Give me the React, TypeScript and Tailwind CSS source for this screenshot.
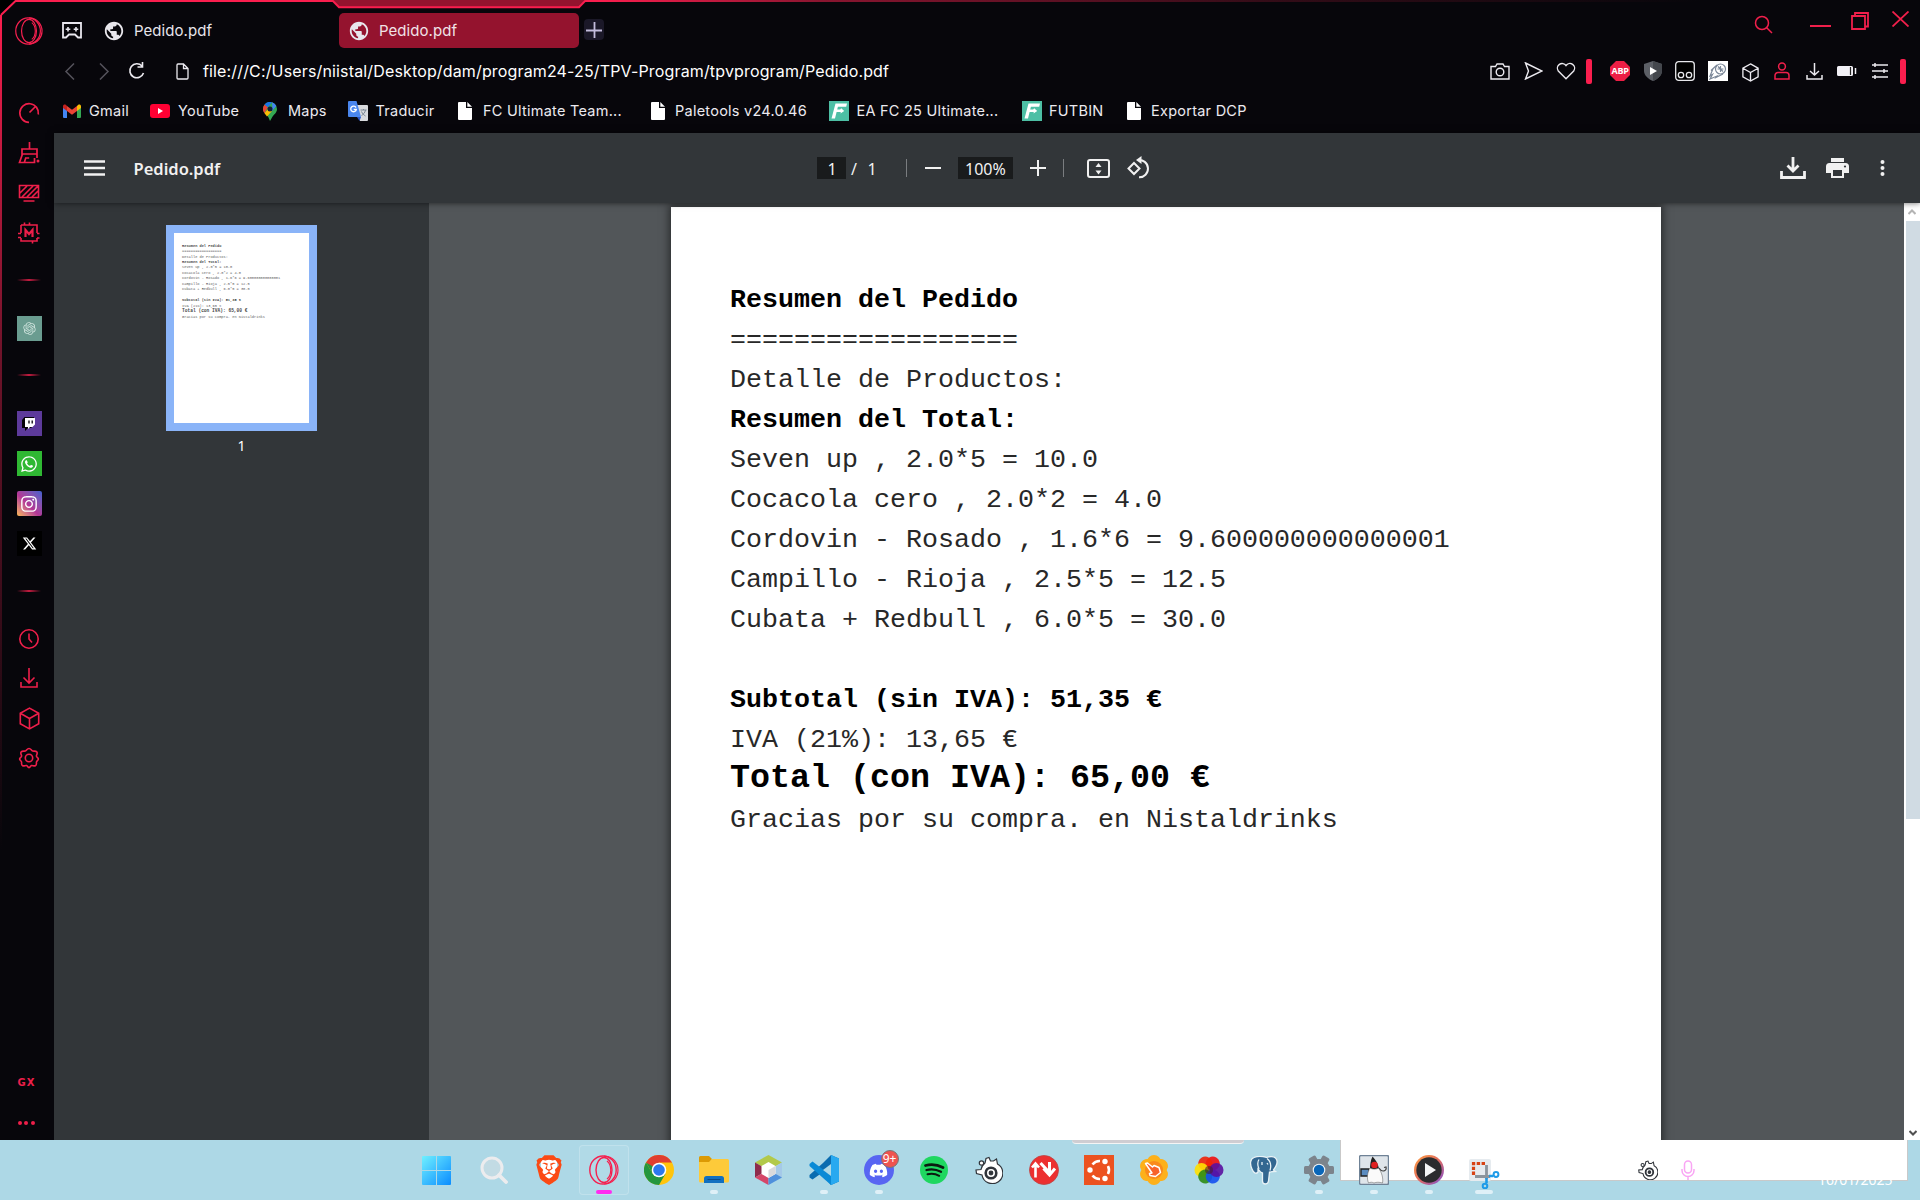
import React from "react";
import type { ReactNode } from "react";
import { FaBrave, FaDiscord, FaWhatsapp, FaInstagram, FaXTwitter } from "react-icons/fa6";
import { MdPublic } from "react-icons/md";
import { RiOpenaiFill } from "react-icons/ri";

const RED = "#fa1e4e";

type P = { children?: ReactNode; w?: number; h?: number; vb?: string; c?: string; sw?: number; f?: string };
function Svg({ children, w = 20, h = 20, vb, c = "currentColor", sw = 1.4, f = "none" }: P) {
  return (
    <svg className="block shrink-0" width={w} height={h} viewBox={vb ?? `0 0 ${w} ${h}`} fill={f} stroke={c} strokeWidth={sw}>
      {children}
    </svg>
  );
}

function Opera({ size, sw = 1.5 }: { size: number; sw?: number }) {
  return (
    <Svg w={size} h={size} vb="0 0 30 30" c="#f5204f" sw={sw}>
      <ellipse cx="14" cy="15" rx="13.200" ry="14" />
      <ellipse cx="15" cy="15" rx="8" ry="12.500" />
      <path d="M18 6c5 4 5 14 0 18" strokeWidth="1.200" />
      <path d="M15 1c9.500.300 14 7.500 14 14s-4.500 13.700-14 14" strokeWidth="1.200" />
    </Svg>
  );
}

function Globe() {
  return (
    <div className="-mx-[2px] flex size-[22px] items-center justify-center text-[#e8e6ec]">
      <MdPublic size={22} />
    </div>
  );
}

function PageFile() {
  return (
    <svg className="block" width="14" height="18" viewBox="0 0 14 18">
      <path d="M1 0h7v6h6v11a1 1 0 0 1-1 1H1a1 1 0 0 1-1-1V1a1 1 0 0 1 1-1z" fill="#fff" />
      <path d="M9.300 0 14 4.700H9.300z" fill="#fff" />
    </svg>
  );
}

function Gmail() {
  return (
    <svg className="block" width="18" height="14" viewBox="0 0 18 14">
      <path d="M0 2v11a1 1 0 0 0 1 1h3V5z" fill="#4285f4" />
      <path d="M18 2v11a1 1 0 0 1-1 1h-3V5z" fill="#34a853" />
      <path d="M4 2v5l5 3.800L14 7V2L9 5.800z" fill="#ea4335" />
      <path d="M0 2.200V4l4 3V2L3 .900C1.800-.100 0 .600 0 2.200z" fill="#c5221f" />
      <path d="M18 2.200V4l-4 3V2l1-1.100c1.200-1 3-.300 3 1.300z" fill="#fbbc04" />
    </svg>
  );
}

function YouTube() {
  return (
    <svg className="block" width="20" height="14" viewBox="0 0 20 14">
      <rect width="20" height="14" rx="3" fill="#ff0033" />
      <path d="M8 4v6l5-3z" fill="#fff" />
    </svg>
  );
}

function Maps() {
  return (
    <svg className="block" width="14" height="19" viewBox="0 0 14 19">
      <path d="M7 0a7 7 0 0 1 7 7c0 4-3.500 5.500-5 8.500L7 19l-1.500-3.500C4.500 12.500 0 11 0 7a7 7 0 0 1 7-7z" fill="#34a853" />
      <path d="M1.700 2.500 5 5l-3.500 6.300C.500 10 0 8.700 0 7c0-1.800.700-3.400 1.700-4.500z" fill="#ea4335" />
      <path d="M1.600 2.500A7 7 0 0 1 9 .300L4.800 5.200z" fill="#1a73e8" />
      <path d="M9 .300a7 7 0 0 1 4.300 3.700L8.800 9.200 9.400 5z" fill="#4285f4" />
      <path d="M1.500 11.300 5 7l4 2-5 5.500z" fill="#fbbc04" />
      <circle cx="7" cy="7" r="2.500" fill="#11203a" />
    </svg>
  );
}

function Translate() {
  return (
    <svg className="block" width="20" height="20" viewBox="0 0 20 20">
      <path d="M8 4h11a1 1 0 0 1 1 1v14a1 1 0 0 1-1 1h-7z" fill="#d8dade" />
      <path d="M1 0h7.500L13 16H1a1 1 0 0 1-1-1V1a1 1 0 0 1 1-1z" fill="#4a86ee" />
      <path d="M9 16h4l-1.500 4z" fill="#2a56c6" />
      <path d="M8 6.600A2.800 2.800 0 1 0 8.300 8.500H5.700" fill="none" stroke="#fff" strokeWidth="1.300" />
      <path d="M12.500 9h6M15.500 8v1M17.500 9c-.500 3-2.500 4.500-4 5.500M13.500 10.500c1 2.500 2.500 3.500 4 4.500" stroke="#7a8794" fill="none" />
    </svg>
  );
}

function Futbin() {
  return (
    <svg className="block" width="20" height="20" viewBox="0 0 20 20">
      <rect width="20" height="20" fill="#4dbfa5" />
      <path d="M6.500 2.500H18l-.800 3.200H8.900L8.200 8.500h3l1-1.300 3 2.700-3.700 2.600.300-1.600H7.600L6 17.500H2.500z" fill="#fff" />
    </svg>
  );
}

const bookmarks: { icon: ReactNode; box: string; cell: string; label: string }[] = [
  { icon: <Gmail />, box: "w-[26px]", cell: "w-[87px]", label: "Gmail" },
  { icon: <YouTube />, box: "w-[28px]", cell: "w-[113px]", label: "YouTube" },
  { icon: <Maps />, box: "w-[25px]", cell: "w-[85px]", label: "Maps" },
  { icon: <Translate />, box: "w-[27.500px]", cell: "w-[110px]", label: "Traducir" },
  { icon: <PageFile />, box: "w-[25px]", cell: "w-[193px]", label: "FC Ultimate Team..." },
  { icon: <PageFile />, box: "w-[24px]", cell: "w-[178px]", label: "Paletools v24.0.46" },
  { icon: <Futbin />, box: "w-[27.500px]", cell: "w-[193px]", label: "EA FC 25 Ultimate..." },
  { icon: <Futbin />, box: "w-[27px]", cell: "w-[105px]", label: "FUTBIN" },
  { icon: <PageFile />, box: "w-[24px]", cell: "w-[130px]", label: "Exportar DCP" },
];

function Cell({ w, children }: { w: string; children?: ReactNode }) {
  return <div className={`${w} flex shrink-0 items-center justify-center`}>{children}</div>;
}

function TabBar() {
  return (
    <div className="flex h-[50px] shrink-0 pt-[13px]">
      <div className="flex h-[35px] w-[58px] items-center pl-[15px]"><Opera size={28} sw={1.3} /></div>
      <div className="flex h-[35px] w-[47px] items-center pl-1">
        <Svg w={20} h={17} c="#e8e6ee" sw={1.8}>
          <path d="M1 1h18v14.500h-3l-3-3H7l-3 3H1z" />
          <path d="M6 5v4.600M3.700 7.300h4.600M14 5v4.600M11.700 7.300h4.600" strokeWidth="1.600" />
        </Svg>
      </div>
      <div className="flex h-[35px] w-[234px] items-center">
        <Globe />
        <span className="mt-[2px] ml-[11px] text-[15px] tracking-[0.060px] text-[#e6e4ea]">Pedido.pdf</span>
      </div>
      <div className="flex h-[35px] w-[240px] items-center rounded-[5px] bg-[#94132e] pl-[11px]">
        <Globe />
        <span className="mt-[2px] ml-[11px] text-[15px] tracking-[0.060px] text-[#f0e2e6]">Pedido.pdf</span>
      </div>
      <div className="mt-[6px] ml-[5px] flex h-[21px] w-5 items-center justify-center rounded bg-[#1b1828]">
        <Svg w={16} h={16} c="#c3bcdc" sw={1.8}><path d="M8.500 0v16M0 8.500h16" /></Svg>
      </div>
      <div className="ml-auto flex h-[35px] pr-[11.500px] text-[#f01f4b]">
        <div className="mt-[2px] mr-[37px]">
          <Svg w={19} h={19} sw={1.5}><circle cx="8" cy="8" r="6.500" /><path d="M12.500 12.500 18 18" /></Svg>
        </div>
        <div className="mr-[20px]"><Svg w={21} h={15} sw={2}><path d="M0 13h21" /></Svg></div>
        <div className="mr-[23px] -mt-px"><Svg w={18} h={18} sw={1.8}><path d="M1 4h13v13H1zM4 3.500V1h13v13.500h-2.500" /></Svg></div>
        <div className="-mt-[2px]"><Svg w={17} h={16} sw={1.8}><path d="M.500.500l16 15M16.500.500l-16 15" /></Svg></div>
      </div>
    </div>
  );
}

function Cube({ size = 20, sw = 1.4 }: { size?: number; sw?: number }) {
  return (
    <Svg w={size} h={size} vb="0 0 20 20" sw={sw}>
      <path d="M10 1l8 4.500v9L10 19l-8-4.500v-9zM2 5.500l8 4.500 8-4.500M10 10v9" />
    </Svg>
  );
}

function AddressBar() {
  return (
    <div className="flex h-[42px] shrink-0 items-center pl-[58px] text-[#eceaf0]">
      <Cell w="w-[24px]"><Svg w={12} h={17} c="#55535c" sw={1.5}><path d="M10 .500 2 8.500l8 8" /></Svg></Cell>
      <div className="w-[10px]" />
      <Cell w="w-[24px]"><Svg w={12} h={17} c="#55535c" sw={1.5}><path d="M2 .500l8 8-8 8" /></Svg></Cell>
      <div className="w-[9px]" />
      <Cell w="w-[24px]">
        <Svg w={18} h={18} sw={1.6}><path d="M14 4A7 7 0 1 0 15.500 11M14.500 0v5h-5" /></Svg>
      </Cell>
      <div className="w-[21px]" />
      <Cell w="w-[24px]">
        <Svg w={13} h={17} sw={1.3}><path d="M1 2a1 1 0 0 1 1-1h5.500L12 5.500V15a1 1 0 0 1-1 1H2a1 1 0 0 1-1-1zM7.500 1v4.500H12" /></Svg>
      </Cell>
      <span className="ml-[9px] text-[16px] tracking-[0.150px] whitespace-nowrap text-white">file:///C:/Users/niistal/Desktop/dam/program24-25/TPV-Program/tpvprogram/Pedido.pdf</span>
      <div className="ml-auto flex items-center pr-[14px]">
        <Cell w="w-[20px]"><Svg w={20} h={17}><path d="M1 3.500h4.500L7 1h6l1.500 2.500H19V16H1z" /><circle cx="10" cy="9" r="3.800" /></Svg></Cell>
        <Cell w="w-[46px]"><Svg w={19} h={18}><path d="M1.500 1 18 9 1.500 17 4.500 9z" /></Svg></Cell>
        <Cell w="w-[20px]"><Svg w={20} h={18}><path d="M10 16.800 2.300 9A4.700 4.700 0 0 1 10 3.500 4.700 4.700 0 0 1 17.700 9z" /></Svg></Cell>
        <div className="ml-[10px] h-[25px] w-[6px] rounded-[2px] bg-[#fa1e4e]" />
        <div className="w-[18px]" />
        <Cell w="w-5">
          <div className="relative flex size-5 items-center justify-center">
            <Svg w={20} h={20} f="#ed1e45" c="none"><path d="M6 0h8l6 6v8l-6 6H6l-6-6V6z" /></Svg>
            <span className="absolute font-['Open_Sans'] text-[9px] font-bold tracking-[-0.300px] text-white">ABP</span>
          </div>
        </Cell>
        <Cell w="w-[45px]">
          <Svg w={18} h={20} c="none"><path d="M9 0l9 3v7c0 4-4 8-9 10-5-2-9-6-9-10V3z" fill="#5c5f66" /><path d="M9 0v20c5-2 9-6 9-10V3z" fill="#44474d" /><path d="M6 6v8l7-4z" fill="#fff" /></Svg>
        </Cell>
        <Cell w="w-5">
          <Svg w={20} h={20} c="#e8e8ec" sw={1.3}><rect x=".700" y=".700" width="18.600" height="18.600" rx="3" fill="#000" /><circle cx="6" cy="14" r="2.700" /><circle cx="14" cy="14" r="2.700" /></Svg>
        </Cell>
        <div className="w-[13px]" />
        <Cell w="w-5">
          <Svg w={20} h={20} c="#7b8798" sw={1.2}><rect width="20" height="20" fill="#fff" stroke="none" /><circle cx="12.500" cy="8" r="5" /><path d="M9 4 3 9.500 4.500 9 2 15l2.500-1.500L2 18l7-3-1 1.500 7-3.500M12.500 5v6M9.500 8h6M10 5.500l5 5" /></Svg>
        </Cell>
        <Cell w="w-[44px]"><div className="mt-[3px]"><Cube size={19} /></div></Cell>
        <Cell w="w-[20px]"><Svg w={16} h={18} c="#f01f4b" sw={1.5}><circle cx="8" cy="4.500" r="3.400" /><path d="M1 17v-3.500a3 3 0 0 1 3-3h8a3 3 0 0 1 3 3V17z" /></Svg></Cell>
        <Cell w="w-[45px]"><Svg w={17} h={18} sw={1.5}><path d="M8.500 1v12M4 9l4.500 4L13 9M1 13v4h15v-4" /></Svg></Cell>
        <Cell w="w-[20px]"><Svg w={20} h={12} c="none"><path d="M1.500 1h13a1.500 1.500 0 0 1 1.500 1.500v7a1.500 1.500 0 0 1-1.500 1.500h-13A1.500 1.500 0 0 1 0 9.500v-7A1.500 1.500 0 0 1 1.500 1z" fill="#f2f0f6" /><path d="M13.500 2v8" stroke="#222" strokeWidth="1.200" /><path d="M18.500 3v6" stroke="#f2f0f6" strokeWidth="1.500" /></Svg></Cell>
        <Cell w="w-[46px]"><Svg w={16} h={18} sw={1.5}><path d="M0 3h16M0 9h16M0 15h16M3 1v4M12 7v4M3 13v4" /></Svg></Cell>
        <div className="-ml-[3px] h-[25px] w-[6px] rounded-[2px] bg-[#fa1e4e]" />
      </div>
    </div>
  );
}

function Bookmarks() {
  return (
    <div className="flex h-[41px] shrink-0 items-center pb-[3px] pl-[63px] text-[14.500px] tracking-[0.250px] text-[#eceaf0]">
      {bookmarks.map((b, i) => (
        <div key={i} className={`${b.cell} flex shrink-0 items-center whitespace-nowrap`}>
          <div className={`${b.box} shrink-0`}>{b.icon}</div>
          <span>{b.label}</span>
        </div>
      ))}
    </div>
  );
}

function Divider() {
  return <div className="h-[2px] w-6 bg-linear-to-r from-transparent via-[#c51c40] to-transparent" />;
}

const side: { h: string; el: ReactNode }[] = [
  { h: "h-[40px]", el: <Svg w={22} h={22} sw={1.7}><path d="M20.300 12.500A9.300 9.300 0 1 0 11 20.300M11.500 10.500l6-6" /></Svg> },
  { h: "h-[40px]", el: <Svg w={22} h={22} sw={1.7}><path d="M11.500 0v6.500M4 7h15v5H4zM4.500 12 1.500 20.500h15V16M19 12v4M6.500 20l1.200-4h3.500" /><circle cx="20" cy="19" r="1.500" fill="currentColor" stroke="none" /></Svg> },
  { h: "h-[40px]", el: <Svg w={22} h={18} sw={1.6}><path d="M1.500 1.500h19v12h-19zM5.500 17h11M2 9l7-7M4 13l11-11M9 13 20 2M14 13l6-6" /></Svg> },
  { h: "h-[40px]", el: <Svg w={24} h={24} sw={1.6}><path d="M4 4h16v8M20 17v3H4v-3M4 4v8M7.500 4V1.500M12.500 4V1.500M4 12.500H1M4 16.500H1M20 12.500h2.500M20 17h2.500M15.500 20v2.500" /><path d="M8.500 16V9l3.500 4 3.500-4v7" strokeWidth="2.200" /></Svg> },
  { h: "h-[54px]", el: <Divider /> },
  { h: "h-[43px]", el: <Cell w="size-[25px] bg-[#6a9c90] text-[#cfe3dd]"><RiOpenaiFill size={15} /></Cell> },
  { h: "h-[50px]", el: <Divider /> },
  { h: "h-[47px]", el: <Cell w="size-[25px] bg-[#5d3a9b] text-white"><TwitchBubble /></Cell> },
  { h: "h-[33px]", el: <Cell w="size-[25px] bg-[#2fb833] text-white"><FaWhatsapp size={18} /></Cell> },
  { h: "h-[47px]", el: <Cell w="size-[25px] rounded-[2px] bg-linear-to-bl from-[#3b5fd0] via-[#b33596] via-55% to-[#fbb64c] text-white"><Instagram /></Cell> },
  { h: "h-[33px]", el: <Cell w="size-[25px] bg-black text-white"><FaXTwitter size={15} /></Cell> },
  { h: "h-[61px]", el: <Divider /> },
  { h: "h-[35px]", el: <Svg w={22} h={22} sw={1.6}><circle cx="11" cy="11" r="9.200" /><path d="M11 5.500V11l3 3.500" /></Svg> },
  { h: "h-[43px]", el: <Svg w={20} h={22} sw={1.6}><path d="M10 1v14.500M4.500 10.500 10 16l5.500-5.500M2 15v5h16v-5" /></Svg> },
  { h: "h-[38px]", el: <Cube size={23} /> },
  { h: "h-[42px]", el: <Svg w={22} h={22} sw={1.6}><path d="M11 1.500c2 0 2.200 2 3.700 2.500 1.300.400 3-.500 4.200 1 1 1.700-.500 2.700-.500 4s2 2 2 3c0 1.300-2 2-2 3.300s.500 2.700-1 3.400c-1.500.600-2.800-.500-4-.100-1 .400-1.200 2-2.400 2s-1.400-1.600-2.400-2c-1.200-.400-2.500.700-4 .100-1.500-.700-1-2.100-1-3.400S1.600 13 1.600 12s2-1.700 2-3-1.500-2.300-.500-4c1.200-1.500 2.900-.600 4.200-1C8.800 3.500 9 1.500 11 1.500z" /><circle cx="11" cy="11" r="3.700" /></Svg> },
];

function Instagram() {
  return <FaInstagram size={18} />;
}

function TwitchBubble() {
  return (
    <Svg w={14} h={14} c="none">
      <path d="M2.500 0 0 3v8h3v3l3-3h3l3-3V0z" fill="#050308" />
      <path d="M3 1h10v6.500L10.500 10H8l-2 2v-2H3z" fill="#fff" />
      <path d="M7 3.500v3M10.200 3.500v3" stroke="#050308" strokeWidth="1.300" />
    </Svg>
  );
}

function SideBar() {
  return (
    <div className="flex w-[54px] shrink-0 flex-col items-center pl-[4px] text-[#ee1f4a]">
      <div className="-mt-[40px] flex flex-col items-center">
        {side.map((s, i) => (
          <div key={i} className={`${s.h} flex items-center justify-center`}>{s.el}</div>
        ))}
      </div>
      <div className="mt-auto mr-[5px] flex flex-col items-center">
        <span className="h-[45px] font-['DejaVu_Sans'] text-[10px] leading-[14px] font-bold tracking-[1px]">GX</span>
        <div className="mb-[15px] flex h-[4px] gap-[2.500px]">
          <i className="size-[4px] rounded-full bg-[#ee1f4a]" /><i className="size-[4px] rounded-full bg-[#ee1f4a]" /><i className="size-[4px] rounded-full bg-[#ee1f4a]" />
        </div>
      </div>
    </div>
  );
}

function PdfToolbar() {
  return (
    <div className="relative z-10 flex h-[70px] shrink-0 items-center bg-[#323639] text-[#f1f1f1] shadow-[0_0_6px_rgba(0,0,0,0.6)]">
      <div className="flex w-[763px] items-center pl-[30px]">
        <Svg w={21} h={16} c="#f1f1f1" sw={2.400}><path d="M0 1.500h21M0 8h21M0 14.500h21" /></Svg>
        <span className="mt-[3px] ml-[28.500px] font-['Noto_Sans'] text-[16.500px] font-semibold">Pedido.pdf</span>
      </div>
      <div className="flex items-center font-['Noto_Sans'] text-[16px]">
        <span className="flex h-[22px] w-[29px] items-center justify-center bg-[#191b1c] pt-px pl-px">1</span>
        <span className="mt-[2px] ml-[5px]">/</span>
        <span className="mt-[2px] ml-[9px] w-[12px] text-center">1</span>
        <i className="ml-[28px] h-[18px] w-px bg-[#7a7d80]" />
        <div className="ml-[18px]"><Svg w={16} h={16} sw={2}><path d="M0 8h16" /></Svg></div>
        <span className="ml-[17px] flex h-[22px] w-[55px] items-center justify-center bg-[#191b1c] pt-px">100%</span>
        <div className="ml-[17px]"><Svg w={16} h={16} sw={2}><path d="M0 8h16M8 0v16" /></Svg></div>
        <i className="ml-[17px] h-[18px] w-px bg-[#7a7d80]" />
        <div className="ml-[23px]"><Svg w={23} h={19} sw={2}><rect x="1" y="1" width="21" height="17" rx="2" /><path d="M8.500 8l3-4 3 4zM8.500 11.500l3 4 3-4z" fill="currentColor" stroke="none" /></Svg></div>
        <div className="-mt-[1px] ml-[17px]"><Svg w={23} h={23} sw={2}><path d="M7 7l5.500 5.500L7 18l-5.500-5.500zM11 4a8.700 8.700 0 1 1 1 17.300" /><path d="M14.500 0v8L9 4z" fill="currentColor" stroke="none" /></Svg></div>
      </div>
      <div className="ml-auto flex items-center pr-[35px]">
        <Svg w={26} h={24} sw={2.800}><path d="M13 1v13M7.500 9.500 13 15l5.500-5.500M1.500 15v6.500h23V15" /></Svg>
        <div className="ml-[20px]"><Svg w={23} h={20} c="none"><path d="M5 0h13v4H5zM3.500 5h16A3.500 3.500 0 0 1 23 8.500V15h-5v5H5v-5H0V8.500A3.500 3.500 0 0 1 3.500 5z" fill="#f1f1f1" /><path d="M7 12h9v6H7z" fill="#323639" /><circle cx="19" cy="8.500" r="1.100" fill="#323639" /></Svg></div>
        <div className="ml-[31px]"><Svg w={5} h={18} c="none" f="#f1f1f1"><circle cx="2.500" cy="3" r="2" /><circle cx="2.500" cy="9" r="2" /><circle cx="2.500" cy="15" r="2" /></Svg></div>
      </div>
    </div>
  );
}

const lines: { t: string; k?: "b" | "big" }[] = [
  { t: "Resumen del Pedido", k: "b" },
  { t: "==================" },
  { t: "Detalle de Productos:" },
  { t: "Resumen del Total:", k: "b" },
  { t: "Seven up , 2.0*5 = 10.0" },
  { t: "Cocacola cero , 2.0*2 = 4.0" },
  { t: "Cordovin - Rosado , 1.6*6 = 9.600000000000001" },
  { t: "Campillo - Rioja , 2.5*5 = 12.5" },
  { t: "Cubata + Redbull , 6.0*5 = 30.0" },
  { t: "" },
  { t: "Subtotal (sin IVA): 51,35 €", k: "b" },
  { t: "IVA (21%): 13,65 €" },
  { t: "Total (con IVA): 65,00 €", k: "big" },
  { t: "Gracias por su compra. en Nistaldrinks" },
];

function Receipt() {
  return (
    <div className="h-[1400px] w-[990px] bg-white pt-[73px] pl-[59px] font-['Liberation_Mono',monospace] text-[26.667px] leading-[40px] text-black">
      {lines.map((l, i) => (
        <div
          key={i}
          className={
            l.k === "big"
              ? "h-[40px] text-[33.333px] leading-[36px] font-bold whitespace-pre"
              : l.k === "b"
                ? "h-[40px] font-bold whitespace-pre"
                : "h-[40px] whitespace-pre text-[#282828]"
          }
        >
          {l.t}
        </div>
      ))}
    </div>
  );
}

function Viewer() {
  return (
    <div className="flex min-h-0 flex-1">
      <div className="flex w-[375px] shrink-0 flex-col items-center bg-[#323639] pt-[22px]">
        <div className="h-[206px] w-[151px] bg-[#8ab4f8] p-[8px]">
          <div className="h-[190px] w-[135px] overflow-hidden bg-white">
            <div className="origin-top-left scale-[0.13636] opacity-75"><Receipt /></div>
          </div>
        </div>
        <span className="mt-[5px] font-['Noto_Sans'] text-[14px] leading-[20px] text-white">1</span>
      </div>
      <div className="min-w-0 flex-1 overflow-hidden bg-[#525659] pt-[4px] pl-[242px]">
        <div className="w-[990px] shadow-[0_0_8px_2px_rgba(0,0,0,0.5)]"><Receipt /></div>
      </div>
      <div className="flex w-4 shrink-0 flex-col items-center justify-between bg-white py-[6px]">
        <Svg w={8} h={6} c="#b4b4b4" sw={2}><path d="M.500 5 4 1.500 7.500 5" /></Svg>
        <div className="mt-[6px] mb-auto ml-auto h-[598px] w-[14px] bg-[#d0dbe3]" />
        <div className="-mb-[2px] pl-[2px]"><Svg w={8} h={6} c="#505050" sw={2}><path d="M.500 1 4 4.500 7.500 1" /></Svg></div>
      </div>
    </div>
  );
}

function Steel({ size, thin }: { size: number; thin?: boolean }) {
  return (
    <Svg w={size} h={size} vb="0 0 28 28" c="#30343a" sw={thin ? 1.500 : 1.200}>
      <path d="M10 7 11 2.500l3-1 1.500 3.500h3l3-2 1 5A10.500 10.500 0 1 1 7 19l-5.500-1.500L1 14l5-.500A11 11 0 0 1 10 7z" fill="#fff" />
      <circle cx="6.500" cy="7" r="2.200" fill="#fff" />
      <circle cx="16" cy="17" r="5.300" strokeWidth="2.600" fill="#fff" />
      <circle cx="16" cy="17" r="1.800" fill="#30343a" />
    </Svg>
  );
}

const petals = ["#f01010", "#f02408", "#ffe000", "#2c8c14", "#1450f0", "#5a10a0"];

const apps: { el: ReactNode; mark?: string }[] = [
  { el: <svg width="29" height="29" viewBox="0 0 29 29"><defs><linearGradient id="win" x2="1" y2="1"><stop stopColor="#6ff0ff" /><stop offset="1" stopColor="#0a8cff" /></linearGradient></defs><path d="M0 1a1 1 0 0 1 1-1h13v14H0zM15 0h13a1 1 0 0 1 1 1v13H15zM0 15h14v14H1a1 1 0 0 1-1-1zM15 15h14v13a1 1 0 0 1-1 1H15z" fill="url(#win)" /></svg> },
  { el: <Svg w={28} h={28} c="#ececee" sw={3}><circle cx="12" cy="12" r="10" fill="#c2dbe4" /><path d="M19 19l7 7" strokeWidth="3.800" strokeLinecap="round" /></Svg> },
  { el: <div className="relative flex h-[30px] w-[26px] items-center justify-center text-[#fb4a14]"><i className="absolute inset-[5px] bg-white" /><FaBrave className="relative" size={30} /></div> },
  { el: <Opera size={30} sw={1.400} />, mark: "h-[4px] w-[16px] bg-[#ff2cf0]" },
  { el: <svg width="30" height="30" viewBox="0 0 30 30"><circle cx="15" cy="15" r="15" fill="#ffc40c" /><path d="M15 15 2 7.500A15 15 0 0 1 28 7.500H15z" fill="#e03e30" /><path d="M2 7.500A15 15 0 0 0 15 30l6.500-11.200L15 15 8.500 18.800z" fill="#24963e" /><path d="M2 7.500 8.500 18.800 15 15 9 10z" fill="#24963e" /><path d="M2 7.500 9 11.500l6-4z" fill="#e03e30" /><circle cx="15" cy="15" r="7.300" fill="#fff" /><circle cx="15" cy="15" r="5.800" fill="#2c78ee" /></svg> },
  { el: <svg width="30" height="28" viewBox="0 0 30 28"><path d="M0 1.500A1.500 1.500 0 0 1 1.500 0H10l3 3-3 4H0z" fill="#dc9a04" /><path d="M0 6h10l3-3h15.500A1.500 1.500 0 0 1 30 4.500V25a1.500 1.500 0 0 1-1.500 1.500h-27A1.500 1.500 0 0 1 0 25z" fill="#fdca3a" /><path d="M5 27v-4.500A2.500 2.500 0 0 1 7.500 20h15a2.500 2.500 0 0 1 2.500 2.500V27z" fill="#1170c0" /><path d="M8.500 23.500h13" stroke="#0b4a87" /></svg>, mark: "h-[4px] w-[8px] bg-[#dff0f7]" },
  { el: <svg width="27" height="30" viewBox="0 0 27 30"><path d="M13.500 0 27 7.500 20 11.500 13.500 8 7 11.500 0 7.500z" fill="#b2c94a" /><path d="M0 7.500 7 11.500v7L0 22.500z" fill="#8e2c4c" /><path d="M27 7.500 20 11.500v7l7 4z" fill="#a5c9e8" /><path d="M0 22.500 7 18.500l6.500 4V30z" fill="#d54668" /><path d="M27 22.500 20 18.500l-6.500 4V30z" fill="#4f90dc" /><path d="M13.500 7 20.500 11v8l-7 4-7-4v-8z" fill="#fff" /><path d="M13.500 15l7-4v8l-7 4z" fill="#d9d9dc" /></svg> },
  { el: <svg width="30" height="30" viewBox="0 0 30 30"><path d="M22 0 30 3.500v23L22 30 12 18.500 3.500 24.500.500 22.500V20L14 8z" fill="#0a6cb0" /><path d="M.500 9 3.500 6.500 22 20.500V30L.500 11z" fill="#0a8ad6" /><path d="M22 0l8 3.500v23L22 30z" fill="#28a9f0" /><path d="M22 9v12l-8-6z" fill="#add8e6" /></svg>, mark: "h-[4px] w-[8px] bg-[#dff0f7]" },
  { el: <div className="relative flex size-[30px] items-center justify-center rounded-full bg-[#5865f2] text-white"><FaDiscord size={19} /><span className="absolute -top-[5px] left-[17px] flex size-[18px] items-center justify-center rounded-full border border-[#777] bg-[#ef5350] font-['Noto_Sans'] text-[12px] text-white">9+</span></div>, mark: "h-[4px] w-[8px] bg-[#dff0f7]" },
  { el: <Svg w={28} h={28} c="#0b1a10" sw={2.800}><circle cx="14" cy="14" r="14" fill="#1fd760" stroke="none" /><path d="M5.500 9.500c6-1.500 12-.800 17.500 2" strokeLinecap="round" /><path d="M6.500 14c5-1.400 10-.600 14.500 1.700" strokeWidth="2.300" strokeLinecap="round" /><path d="M7.500 18.300c4-1 8-.600 11.700 1.500" strokeWidth="2" strokeLinecap="round" /></Svg> },
  { el: <Steel size={28} /> },
  { el: <Svg w={30} h={30} c="#fff" sw={3}><circle cx="15" cy="15" r="14.500" fill="#ec3030" stroke="#b44" strokeWidth=".800" /><path d="M6.500 22.500V9M3 12.500l3.500-4 3.500 4" strokeWidth="2.600" /><path d="M11.500 8 19 16" /><path d="M20.500 7v12M14.500 13.500l6 6.500 5.500-6.500" /></Svg> },
  { el: <Svg w={30} h={30} c="#fff" sw={2.600}><rect width="30" height="30" fill="#ec5220" stroke="none" /><path d="M8.500 9.500A9 9 0 0 1 16 6M24 11a9 9 0 0 1 0 8M16 24a9 9 0 0 1-7.500-3.500" /><circle cx="21" cy="6.500" r="2.700" fill="#fff" stroke="none" /><circle cx="6" cy="15" r="2.700" fill="#fff" stroke="none" /><circle cx="21" cy="23.500" r="2.700" fill="#fff" stroke="none" /></Svg> },
  { el: <Svg w={30} h={30} c="none" f="#fdb01a">{[0, 60, 120, 180, 240, 300].map((a) => <circle key={a} cx="15" cy="7" r="7" transform={`rotate(${a} 15 15)`} />)}<circle cx="15" cy="15" r="9" fill="#fa8a1c" /><path d="M6.500 8.500 8.500 8l5 4 1.500-1.500 5 2 1.500 5-5 4-5.500-1-.500-2 2.500-.500z" fill="#f8622a" stroke="#fff" strokeWidth="1.500" strokeLinejoin="round" /></Svg> },
  { el: <Svg w={30} h={30} c="none">{petals.map((p, i) => <circle key={p} cx="15" cy="7.500" r="7" fill={p} opacity=".900" transform={`rotate(${30 - i * 60} 15 15)`} />)}<circle cx="15" cy="15" r="4" fill="#4a2030" opacity=".600" /></Svg> },
  { el: <Svg w={28} h={29} c="#e8f2f6" sw={1.300}><path d="M4 1.500C0 3-.300 8 2 13c1.500 4 4 5.500 6 3v-3l2.500 3 2 1v8c0 4 5.500 4 6 0l1-9 6-.500-2-1.500c3-4 5-9 2-12-3-2.500-6-1.500-9-.500-3-1-9-1.500-12.500 0z" fill="#336791" /><path d="M9 3.500c-2 3-1.500 6 0 9.500M17 2.500c4 3 4.500 7 3 12M12 6v3M17 7l1 1.500" /></Svg> },
  { el: <Svg w={30} h={30} c="none"><g fill="#7c848c">{[0, 60, 120, 180, 240, 300].map((a) => <rect key={a} x="11" y="0" width="8" height="8" rx="1.500" transform={`rotate(${a + 30} 15 15)`} />)}<circle cx="15" cy="15" r="11" /></g><circle cx="15" cy="15" r="6.300" fill="#eef4f8" /><circle cx="15" cy="15" r="5.200" fill="#0a66b8" /></Svg>, mark: "h-[4px] w-[8px] bg-[#dff0f7]" },
  { el: <Svg w={30} h={30} c="none"><rect x=".500" y=".500" width="29" height="29" rx="1.500" fill="#dfe5ea" stroke="#6f8296" /><path d="M2 14h8v7H2z" fill="#5b8cc0" stroke="#222" /><path d="M13.500 1.500c3 3 5.500 7 6.500 12l-9 1c0-5 .500-9 2.500-13z" fill="#222" /><path d="M11 13c-2.500 4-3.500 10-1.500 15 2-1 3.500-1 5.500 0 2.500-1 5-1 8.500 0 1-5-1-11-4-15-2 1.500-6 1.500-8.500 0z" fill="#fafafa" stroke="#555" strokeWidth=".500" /><circle cx="15.500" cy="10" r="3.300" fill="#e02020" /><path d="M20 13c3 5 8 3 7-1l-2 .500" stroke="#444" strokeWidth="1.200" /></Svg>, mark: "h-[4px] w-[8px] bg-[#dff0f7]" },
  { el: <svg width="30" height="30" viewBox="0 0 30 30"><defs><linearGradient id="mp" x2="1" y2="1"><stop stopColor="#ffa040" /><stop offset=".500" stopColor="#e06a60" /><stop offset="1" stopColor="#7a50d8" /></linearGradient></defs><circle cx="15" cy="15" r="15" fill="url(#mp)" /><circle cx="15" cy="15" r="12.700" fill="#2b2b2d" /><path d="M11 8v14l11-7z" fill="#f4f4f4" /></svg>, mark: "h-[4px] w-[8px] bg-[#dff0f7]" },
  { el: <div className="mt-[8px]"><Svg w={32} h={30} c="none"><rect x="1" y="0" width="22" height="22" rx="2" fill="#e6ebef" /><path d="M5.500 16V4.500H17" stroke="#d84315" strokeWidth="3.200" strokeDasharray="3.400 1.500" /><path d="M18.500 6v14M7 17.500h15" stroke="#8b949c" strokeWidth="2.800" /><path d="M18.500 19v5M21 17h4" stroke="#1e9be8" strokeWidth="2.600" /><circle cx="28" cy="15.500" r="2.400" stroke="#1e9be8" strokeWidth="2" /><circle cx="17" cy="27" r="2.300" stroke="#1e9be8" strokeWidth="2" /></Svg></div>, mark: "h-[4px] w-[18px] bg-[#dff0f7]" },
];

function Taskbar() {
  return (
    <div className="relative h-[60px] overflow-hidden bg-[#add8e6]">
      <div className="absolute top-0 left-[1340px] h-[41px] w-[568px] border-r border-b border-l border-[#c9c9c9] bg-white" />
      <div className="absolute top-0 left-[1072px] h-[4px] w-[172px] rounded-b border-b border-[#f4f4f4] bg-[#cfcdd2]" />
      <div className="absolute top-[5px] left-[579px] size-[50px] rounded border border-white/20 bg-white/5" />
      <div className="relative flex h-[60px] pl-[409px]">
        {apps.map((a, i) => (
          <div key={i} className={`${i === 0 ? "mr-[2px]" : ""} flex w-[55px] shrink-0 flex-col items-center`}>
            <div className="flex h-[50px] items-center pt-[10px]">{a.el}</div>
            {a.mark && <i className={`${a.mark} rounded-full`} />}
          </div>
        ))}
        <div className="ml-[127px] flex h-[60px] items-center"><Steel size={20} thin /></div>
        <div className="ml-[23px] flex h-[60px] items-center">
          <Svg w={14} h={20} c="#f9a5f4" sw={1.500}><rect x="3.500" y="1" width="7" height="12" rx="3.500" /><path d="M1 9v1.500a6 6 0 0 0 12 0V9M7 16.500V20" /></Svg>
        </div>
        <span className="ml-[123px] pt-[30px] font-['Noto_Sans'] text-[14px] leading-[20px] text-white">16/01/2025</span>
      </div>
    </div>
  );
}

export default function App() {
  return (
    <div className="h-[1200px] w-[1920px] overflow-hidden bg-[#07060b] font-['Inter',sans-serif]">
      <div className="relative flex h-[1140px] flex-col">
        <TabBar />
        <AddressBar />
        <Bookmarks />
        <div className="flex min-h-0 flex-1">
          <SideBar />
          <div className="flex min-w-0 flex-1 flex-col">
            <PdfToolbar />
            <Viewer />
          </div>
        </div>
        <svg className="pointer-events-none absolute top-0 left-0" width="1920" height="900" fill="none">
          <defs>
            <linearGradient id="edgeTop" gradientUnits="userSpaceOnUse" x1="600" y1="0" x2="1700" y2="0"><stop stopColor={RED} /><stop offset=".200" stopColor="#8a1530" /><stop offset=".600" stopColor="#350c18" /><stop offset="1" stopColor="#07060b" /></linearGradient>
            <linearGradient id="edgeLeft" gradientUnits="userSpaceOnUse" x1="0" y1="15" x2="0" y2="850"><stop stopColor={RED} /><stop offset=".400" stopColor="#70132a" /><stop offset="1" stopColor="#07060b" /></linearGradient>
          </defs>
          <path d="M0 0h15L0 14z" fill="#000" />
          <path d="M333 0h252l-6 7H339z" fill="#94132e" />
          <path d="M1 15 15.500 1H333l6 6.300h240L585 1h20" stroke={RED} strokeWidth="2" />
          <path d="M600 0h1320v2H600z" fill="url(#edgeTop)" />
          <path d="M0 15h2v840H0z" fill="url(#edgeLeft)" />
        </svg>
      </div>
      <Taskbar />
    </div>
  );
}
